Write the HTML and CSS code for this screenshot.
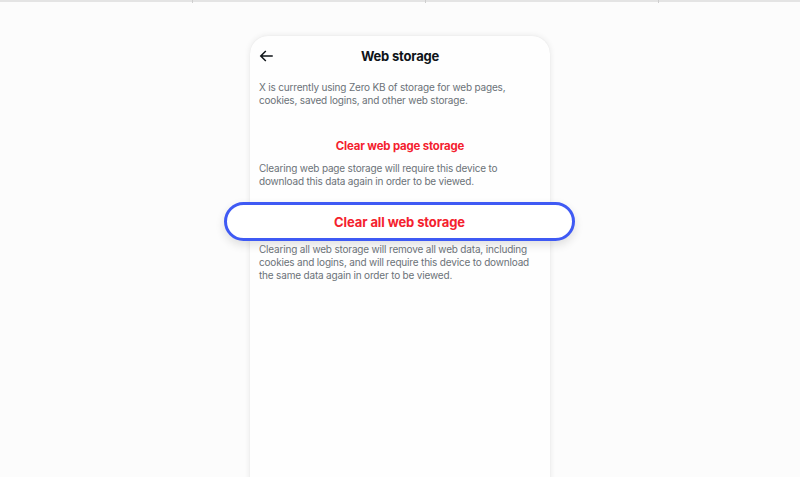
FILE: index.html
```html
<!DOCTYPE html>
<html>
<head>
<meta charset="utf-8">
<link rel="stylesheet" href="styles.css">
</head>
<body>
<div class="topbar">
  <span class="seg"></span><span class="seg"></span><span class="seg"></span><span class="seg"></span>
</div>
<div class="stage">
  <div class="card">
    <div class="header">
      <svg class="back" width="18" height="18" viewBox="0 0 24 24"><path d="M7.414 13l5.043 5.04-1.414 1.42L3.586 12l7.457-7.46 1.414 1.42L7.414 11H21v2H7.414z" fill="#0f1419"/></svg>
      <div class="title">Web storage</div>
    </div>
    <p class="desc first">X is currently using Zero KB of storage for web pages, cookies, saved logins, and other web storage.</p>
    <div class="action">Clear web page storage</div>
    <p class="desc">Clearing web page storage will require this device to download this data again in order to be viewed.</p>
    <div class="pill">Clear all web storage</div>
    <p class="desc">Clearing all web storage will remove all web data, including cookies and logins, and will require this device to download the same data again in order to be viewed.</p>
  </div>
</div>
</body>
</html>
```
FILE: styles.css
```css
html, body {
  margin: 0;
  padding: 0;
  background: #fcfcfc;
  font-family: Inter, "Liberation Sans", sans-serif;
  overflow: hidden;
  height: 477px;
}
.topbar {
  display: flex;
  height: 2px;
  background: #e4e4e4;
}
.seg {
  flex: 0 0 192px;
  border-right: 1px solid #cfcfcf;
  height: 3px;
}
.seg:nth-child(2) { flex-basis: 232px; }
.seg:nth-child(3) { flex-basis: 232px; }
.seg:last-child { flex: 1; border-right: none; }
.stage {
  display: flex;
  justify-content: center;
  padding-top: 34px;
}
.card {
  width: 300px;
  height: 460px;
  background: #fefefe;
  border-radius: 18px 18px 0 0;
  box-shadow: 0 0 6px rgba(0,0,0,0.09), 0 0 1px rgba(0,0,0,0.08);
  box-sizing: border-box;
  padding: 0 9px;
  display: flex;
  flex-direction: column;
}
.header {
  height: 40px;
  display: flex;
  align-items: center;
  justify-content: center;
  position: relative;
}
.back {
  position: absolute;
  left: -2px;
  top: 11px;
}
.title {
  font-weight: 700;
  font-size: 13px;
  color: #0f1419;
  letter-spacing: -0.2px;
}
.desc {
  margin: 0;
  font-size: 10px;
  line-height: 13px;
  color: #6b7278;
  letter-spacing: -0.18px;
}
.desc.first { margin-top: 5px; }
.action {
  margin-top: 26px;
  height: 26px;
  display: flex;
  align-items: center;
  justify-content: center;
  font-size: 11.4px;
  font-weight: 700;
  color: #f4212e;
  letter-spacing: -0.15px;
  margin-bottom: 3px;
}
.pill {
  margin: 14px -34px 2px -35px;
  height: 39px;
  box-sizing: border-box;
  border: 3px solid #3f5af4;
  border-radius: 20px;
  background: #fff;
  box-shadow: 0 4px 10px rgba(0,0,0,0.12);
  display: flex;
  align-items: center;
  justify-content: center;
  font-size: 13px;
  font-weight: 700;
  color: #f4212e;
  letter-spacing: -0.1px;
}
```
